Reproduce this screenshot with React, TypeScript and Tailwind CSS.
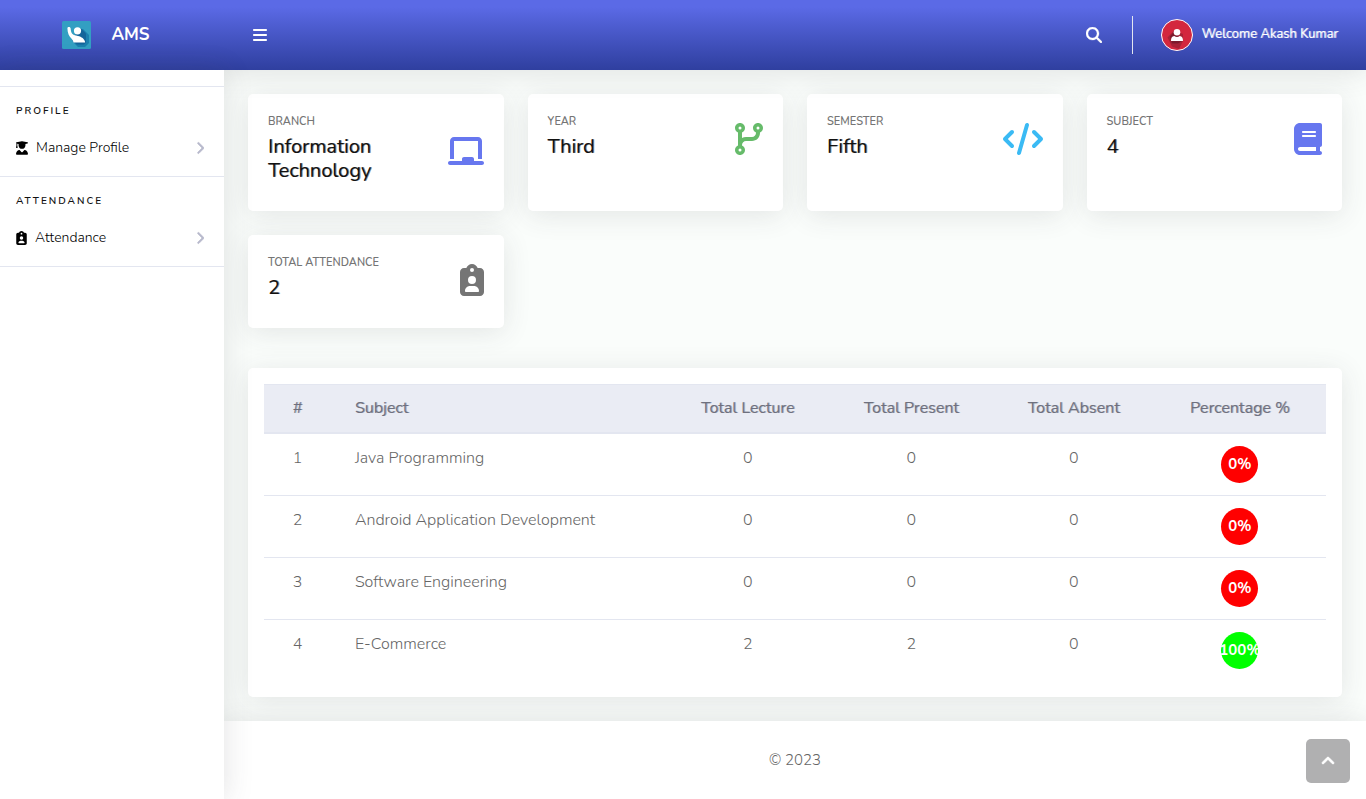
import type { ReactNode } from "react";
import {
  FaBars,
  FaBook,
  FaChalkboard,
  FaChevronRight,
  FaAngleUp,
  FaClipboardUser,
  FaCode,
  FaCodeBranch,
  FaMagnifyingGlass,
  FaUserGraduate,
} from "react-icons/fa6";

const cardShadow = "shadow-[0_4px_28px_0_rgba(58,59,69,0.12)]";
const barShadow = "shadow-[0_2px_28px_0_rgba(58,59,69,0.15)]";

function Logo() {
  return (
    <svg viewBox="0 0 29 28" className="h-7 w-[29px]" aria-hidden="true">
      <rect width="29" height="28" rx="1.5" fill="#339fc2" />
      <path d="M17 8.500l4-.5 6 6v8l-4 4h-7l-5-5z" fill="#1b7fae" />
      <path d="M17 8l2-.5 5 5v9l-2 2h-7l-5-4z" fill="#14649a" />
      <circle cx="15.500" cy="9.800" r="3.600" fill="#fff" />
      <path
        d="M5.400 7.200c0-1.500 2.800-1.600 3.200 0 .2 2.600.6 4.400 1.900 5.800 1.200 1.200 3 1.300 5.500 2 3.500.9 6.500 2.500 7.200 6.500H11.500c-.3-1.300-.8-2.500-1.900-3.800C7 15.500 5.500 12 5.400 7.200z"
        fill="#fff"
      />
    </svg>
  );
}

function Avatar() {
  return (
    <svg viewBox="0 0 32 32" className="size-8" aria-hidden="true">
      <circle cx="16" cy="16" r="15.500" fill="#d3273e" stroke="#fff" />
      <path d="M13 11.500L6.500 18.500l4.500 9 7 2.500L22 22V15z" fill="#a82236" />
      <path d="M13 12.500L9 17.500l2 7h6l5-3z" fill="#7d1a2c" />
      <circle cx="16" cy="13.200" r="3.300" fill="#fff" />
      <path d="M10 22c0-3 .8-4.600 3.300-4.900 1.500 1.200 3.900 1.200 5.400 0 2.500.3 3.300 1.900 3.300 4.900z" fill="#fff" />
    </svg>
  );
}

function SideSection({ title, icon, label }: { title: string; icon: ReactNode; label: string }) {
  return (
    <section className="border-t border-[#e3e6f0] last:border-b">
      <h2 className="px-4 pt-4 text-[10px] leading-4 font-semibold tracking-[2px] text-[#111] uppercase">
        {title}
      </h2>
      <a href="#" className="mt-[9px] mb-2 flex h-10 items-center gap-2 pr-5 pl-4 text-sm font-light text-black">
        {icon}
        <span>{label}</span>
        <FaChevronRight
          className="ml-auto h-3.5 w-2 text-[#b7b9cc]"
          stroke="currentColor"
          strokeWidth="28"
        />
      </a>
    </section>
  );
}

function StatCard({ label, value, icon }: { label: string; value: string; icon: ReactNode }) {
  return (
    <article className={`rounded-[5px] bg-white px-5 pt-5 pb-[23px] ${cardShadow}`}>
      <div className="flex items-center gap-2">
        <div className="min-w-0 flex-1 pb-[5px]">
          <h3 className="text-[11px] leading-4 font-semibold text-[#757575] uppercase">{label}</h3>
          <p className="mt-[5px] text-xl leading-6 font-normal text-[#111] [text-shadow:1px_0_0_rgba(17,17,17,0.5)]">
            {value}
          </p>
        </div>
        {icon}
      </div>
    </article>
  );
}

const subjects = [
  { name: "Java Programming", lecture: 0, present: 0, absent: 0, percent: 0 },
  { name: "Android Application Development", lecture: 0, present: 0, absent: 0, percent: 0 },
  { name: "Software Engineering", lecture: 0, present: 0, absent: 0, percent: 0 },
  { name: "E-Commerce", lecture: 2, present: 2, absent: 0, percent: 100 },
];

export default function App() {
  return (
    <div className="flex min-h-screen flex-col bg-[#fafdfb] font-['Nunito','Open_Sans',sans-serif] text-[#757575]">
      <header
        className={`z-10 flex h-[70px] items-center bg-linear-to-b from-[#5b6ae6] from-10% to-[#2f3f9f] text-white ${barShadow}`}
      >
        <a
          href="#"
          className="flex w-56 shrink-0 items-center justify-center gap-5 pr-3 text-[17px] font-bold"
        >
          <Logo />
          <span>AMS</span>
        </a>
        <button aria-label="Toggle sidebar" className="ml-5 flex size-8 items-center justify-center">
          <FaBars className="size-4" />
        </button>
        <button aria-label="Search" className="ml-auto flex size-8 items-center justify-center">
          <FaMagnifyingGlass className="size-4" stroke="currentColor" strokeWidth="10" />
        </button>
        <div className="mr-7 ml-[22px] h-[38px] w-px bg-[#e3e6f0]" />
        <button className="mr-7 flex items-center gap-2 text-[13px] font-normal">
          <Avatar />
          <span className="[text-shadow:1px_0_0_rgba(255,255,255,0.6)]">Welcome Akash Kumar</span>
        </button>
      </header>

      <div className="flex flex-1">
        <nav className={`z-10 w-56 shrink-0 bg-white pt-4 ${barShadow}`}>
          <SideSection
            title="Profile"
            label="Manage Profile"
            icon={<FaUserGraduate className="h-3.5 w-3" />}
          />
          <SideSection
            title="Attendance"
            label="Attendance"
            icon={<FaClipboardUser className="h-3.5 w-[11px]" />}
          />
        </nav>

        <div className="flex min-w-0 flex-1 flex-col">
          <main className="p-6">
            <div className="grid grid-cols-4 gap-6">
              <StatCard
                label="Branch"
                value="Information Technology"
                icon={<FaChalkboard className="h-8 w-9 text-[#6777ef]" />}
              />
              <StatCard label="Year" value="Third" icon={<FaCodeBranch className="h-8 w-7 text-[#66bb6a]" />} />
              <StatCard label="Semester" value="Fifth" icon={<FaCode className="h-8 w-10 text-[#3abaf4]" />} />
              <StatCard label="Subject" value="4" icon={<FaBook className="h-8 w-7 text-[#6777ef]" />} />
              <StatCard
                label="Total Attendance"
                value="2"
                icon={<FaClipboardUser className="h-8 w-6 text-[#757575]" />}
              />
            </div>

            <div className={`mt-10 rounded-[5px] bg-white p-4 ${cardShadow}`}>
              <table className="w-full table-fixed border-collapse text-center">
                <colgroup>
                  <col className="w-[6.3%]" />
                  <col className="w-[31.6%]" />
                  <col className="w-[15.3%]" />
                  <col className="w-[15.5%]" />
                  <col className="w-[15.1%]" />
                  <col className="w-[16.2%]" />
                </colgroup>
                <thead>
                  <tr className="h-12 border-t border-b-2 border-[#e3e6f0] bg-[#eaecf4] text-[#6e707e] [text-shadow:1px_0_0_rgba(110,112,126,0.5)]">
                    <th className="font-normal">#</th>
                    <th className="px-6 text-left font-normal">Subject</th>
                    <th className="font-normal">Total Lecture</th>
                    <th className="font-normal">Total Present</th>
                    <th className="font-normal">Total Absent</th>
                    <th className="font-normal">Percentage %</th>
                  </tr>
                </thead>
                <tbody className="align-top font-light text-[#666]">
                  {subjects.map((s, i) => (
                    <tr key={s.name} className="border-b border-[#e3e6f0] last:border-0">
                      <td className="py-3">{i + 1}</td>
                      <td className="px-6 py-3 text-left">{s.name}</td>
                      <td className="py-3">{s.lecture}</td>
                      <td className="py-3">{s.present}</td>
                      <td className="py-3">{s.absent}</td>
                      <td className="py-3">
                        <span
                          className={`mx-auto flex size-[37px] items-center justify-center rounded-full text-[15px] font-bold text-white ${
                            s.percent >= 75 ? "bg-[#00ff00]" : "bg-[#ff0000]"
                          }`}
                        >
                          {s.percent}%
                        </span>
                      </td>
                    </tr>
                  ))}
                </tbody>
              </table>
            </div>
          </main>

          <footer className={`flex flex-1 items-center justify-center bg-white text-[15px] font-light text-[#666] ${barShadow}`}>
            © 2023
          </footer>
        </div>
      </div>

      <a
        href="#"
        aria-label="Back to top"
        className="fixed right-4 bottom-4 z-20 flex size-11 items-center justify-center rounded-[5px] bg-[#b0b0b1] text-white"
      >
        <FaAngleUp className="size-4" stroke="currentColor" strokeWidth="24" />
      </a>
    </div>
  );
}
